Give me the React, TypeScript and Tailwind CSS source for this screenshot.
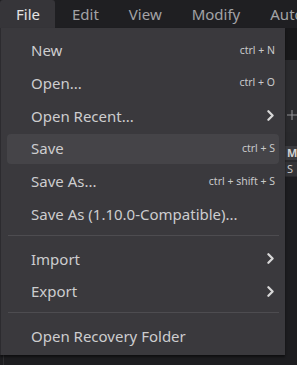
import { ChevronRight } from 'lucide-react'

type Item =
  | { kind: 'item'; label: string; shortcut?: string; sub?: boolean; active?: boolean }
  | { kind: 'sep' }

const ITEMS: Item[] = [
  { kind: 'item', label: 'New', shortcut: 'ctrl + N' },
  { kind: 'item', label: 'Open...', shortcut: 'ctrl + O' },
  { kind: 'item', label: 'Open Recent...', sub: true },
  { kind: 'item', label: 'Save', shortcut: 'ctrl + S', active: true },
  { kind: 'item', label: 'Save As...', shortcut: 'ctrl + shift + S' },
  { kind: 'item', label: 'Save As (1.10.0-Compatible)...' },
  { kind: 'sep' },
  { kind: 'item', label: 'Import', sub: true },
  { kind: 'item', label: 'Export', sub: true },
  { kind: 'sep' },
  { kind: 'item', label: 'Open Recovery Folder' },
]

const MENUS = ['File', 'Edit', 'View', 'Modify', 'Automate']

export default function App() {
  return (
    <div
      className="w-[297px] h-[365px] overflow-hidden bg-[#1d1d20] flex flex-col"
      style={{ fontFamily: '"Noto Sans", "Open Sans", sans-serif' }}
    >
      {/* menu bar */}
      <div className="h-[28px] shrink-0 flex items-stretch bg-[#1f1f22] whitespace-nowrap overflow-hidden">
        {MENUS.map((m, i) => (
          <div
            key={m}
            className={`flex items-center text-[15px] ${
              i === 0
                ? 'pl-[16px] pr-[15px] bg-[#363539] text-[#e4e4e4] rounded-t-[3px]'
                : 'px-[15px] text-[#a3a3a6]'
            } ${i === 1 ? 'ml-[2px]' : ''}`}
          >
            {m}
          </div>
        ))}
      </div>

      {/* workspace behind the menu */}
      <div className="relative flex-1 flex flex-col">
        <div className="h-[32px] bg-[#18181a]" />
        <div className="h-[72px] bg-[#2a2a2d] flex items-end pb-[10px] pl-[287px]">
          <svg width="12" height="14" viewBox="0 0 12 14" className="text-[#8e8e92]">
            <path d="M6 1v12M0 7h12" stroke="currentColor" strokeWidth="1.3" />
          </svg>
        </div>
        <div className="h-[45px] bg-[#29292c] flex flex-col pt-[14px] pl-[285px] gap-[2px]">
          <div className="h-[14px] bg-[#3b3b3f] text-[11px] font-bold text-[#d0d0d0] leading-[14px] pl-[2px]">M</div>
          <div className="h-[14px] bg-[#333336] text-[11px] text-[#c8c8c8] leading-[14px] pl-[2px]">S</div>
        </div>
        <div className="flex-1 bg-[#1d1d20] pl-[3px]">
          <div className="w-px h-full bg-[#2e2e31]" />
        </div>

        {/* dropdown */}
        <div className="absolute left-0 top-0 w-[285px] h-[327px] bg-[#3a393d] border-l border-[#2c2b2f] pt-[6px] shadow-[0_2px_2px_rgba(0,0,0,0.5)]">
          {ITEMS.map((it, i) =>
            it.kind === 'sep' ? (
              <div key={i} className="pt-[4px] pb-[7px] ml-[7px] mr-[6px]">
                <div className="h-px bg-[#4d4c50]" />
              </div>
            ) : (
              <div key={i} className="h-[32.75px] flex items-center ml-[6px] mr-[6px]">
                <div
                  className={`h-[30px] w-full flex items-center pl-[24px] pr-[4px] rounded-[4px] ${
                    it.active ? 'bg-[#454448]' : ''
                  }`}
                >
                  <span className="flex-1 text-[15px] text-[#cdcdcf] whitespace-nowrap">{it.label}</span>
                  {it.shortcut && (
                    <span className="text-[10.5px] text-[#c9c9cb] whitespace-nowrap">{it.shortcut}</span>
                  )}
                  {it.sub && (
                    <ChevronRight size={17} strokeWidth={3.2} className="text-[#d8d8d8] -mr-[4px]" />
                  )}
                </div>
              </div>
            ),
          )}
        </div>
      </div>
    </div>
  )
}
